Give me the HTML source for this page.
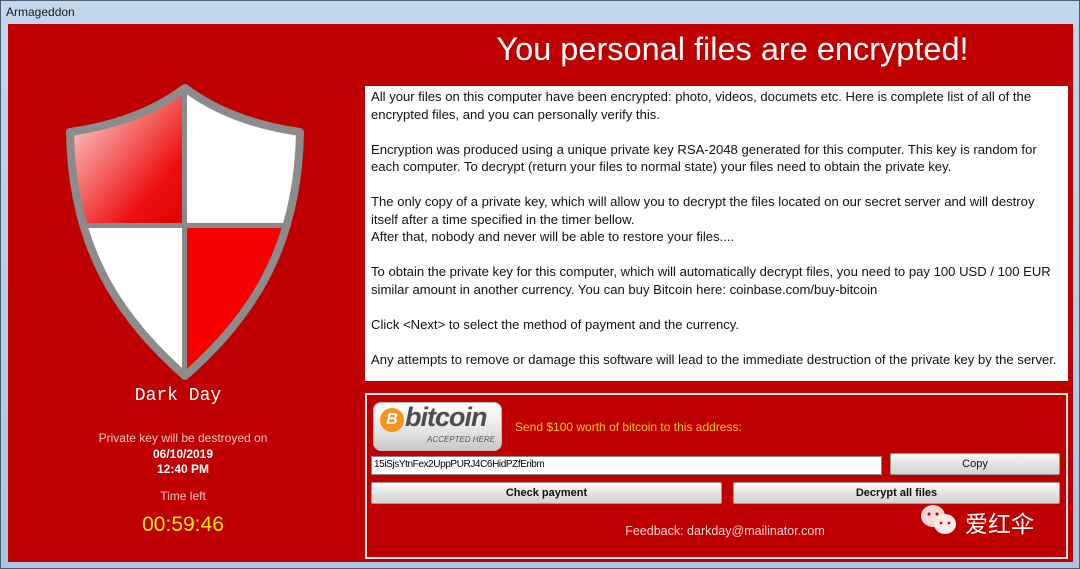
<!DOCTYPE html>
<html><head><meta charset="utf-8"><style>
*{margin:0;padding:0;box-sizing:border-box}
body{width:1080px;height:569px;overflow:hidden;background:#a9c4e0;font-family:"Liberation Sans",sans-serif;position:relative}
.abs{position:absolute}
#frame{left:0;top:0;width:1080px;height:569px;background:linear-gradient(#c2d6ec,#aac6e4);border:1px solid #4a5e72}
#title{left:6px;top:5px;font-size:12px;color:#1a1a1a}
#red{left:8px;top:24px;width:1065px;height:538px;background:#bf0000}
#head{left:365px;top:31px;width:735px;text-align:center;font-size:32.5px;color:#fff}
#txt{left:365px;top:86px;width:703px;height:295px;background:#fff;padding:2px 0 0 6px;font-size:13.1px;line-height:17.5px;color:#111;white-space:nowrap}
#pay{left:365px;top:393px;width:703px;height:166px;border:2px solid #f4e0e0}
.btn{background:linear-gradient(#fafafa,#e2e2e2 55%,#d2d2d2);border:1px solid #9a9a9a;font-size:11px;text-align:center;color:#111;border-radius:2px}
.c{text-align:center;color:#fff}
</style></head><body>
<div id="frame" class="abs"></div>
<div id="title" class="abs">Armageddon</div>
<div id="red" class="abs"></div>
<svg class="abs" style="left:0;top:0" width="360" height="400">
<defs><linearGradient id="g1" x1="0" y1="0" x2="1" y2="1"><stop offset="0" stop-color="#fff"/><stop offset="0.75" stop-color="#ee1010"/><stop offset="1" stop-color="#e00000"/></linearGradient>
<clipPath id="cp"><path d="M185,88 Q140,122 70,132 C72,250 120,318 185,376 C250,318 298,250 300,132 Q230,122 185,88Z"/></clipPath></defs>
<g clip-path="url(#cp)">
<rect x="60" y="80" width="125" height="146" fill="url(#g1)"/>
<rect x="185" y="80" width="125" height="146" fill="#fff"/>
<rect x="60" y="226" width="125" height="160" fill="#fff"/>
<rect x="185" y="226" width="125" height="160" fill="#f80000"/>
<rect x="60" y="223" width="250" height="5" fill="#8a8a8a"/>
<rect x="182" y="80" width="5" height="310" fill="#8a8a8a"/>
</g>
<path d="M185,88 Q140,122 70,132 C72,250 120,318 185,376 C250,318 298,250 300,132 Q230,122 185,88Z" fill="none" stroke="#8c8c8c" stroke-width="8" stroke-linejoin="round"/>
</svg>
<div class="abs c" style="left:78px;top:386px;width:200px;font-family:'Liberation Mono',monospace;font-size:18px;letter-spacing:0px">Dark Day</div>
<div class="abs c" style="left:58px;top:431px;width:250px;font-size:12px;color:#f2c4c4">Private key will be destroyed on</div>
<div class="abs c" style="left:58px;top:447px;width:250px;font-size:12px;font-weight:bold;line-height:15px">06/10/2019<br>12:40 PM</div>
<div class="abs c" style="left:58px;top:489px;width:250px;font-size:12px;color:#f2c4c4">Time left</div>
<div class="abs c" style="left:58px;top:513px;width:250px;font-size:21px;color:#ffea00">00:59:46</div>
<div id="head" class="abs">You personal files are encrypted!</div>
<div id="txt" class="abs">All your files on this computer have been encrypted: photo, videos, documets etc. Here is complete list of all of the<br>encrypted files, and you can personally verify this.<br><br>Encryption was produced using a unique private key RSA-2048 generated for this computer. This key is random for<br>each computer. To decrypt (return your files to normal state) your files need to obtain the private key.<br><br>The only copy of a private key, which will allow you to decrypt the files located on our secret server and will destroy<br>itself after a time specified in the timer bellow.<br>After that, nobody and never will be able to restore your files....<br><br>To obtain the private key for this computer, which will automatically decrypt files, you need to pay 100 USD / 100 EUR<br>similar amount in another currency. You can buy Bitcoin here: coinbase.com/buy-bitcoin<br><br>Click &lt;Next&gt; to select the method of payment and the currency.<br><br>Any attempts to remove or damage this software will lead to the immediate destruction of the private key by the server.</div>
<div id="pay" class="abs"></div>
<div class="abs" style="left:373px;top:402px;width:129px;height:49px;border-radius:8px;background:linear-gradient(#ffffff,#e4e4e4 60%,#c8c8c8);border:1px solid #bbb"></div>
<div class="abs" style="left:380px;top:408px;width:24px;height:24px;border-radius:50%;background:#f7931a;color:#fff;font-weight:bold;font-size:16px;text-align:center;line-height:24px;font-style:italic">B</div>
<div class="abs" style="left:405px;top:402px;font-size:27px;font-weight:bold;font-style:italic;color:#4d4d4d;letter-spacing:-1px">bitcoin</div>
<div class="abs" style="left:427px;top:435px;font-size:8px;font-style:italic;color:#555">ACCEPTED HERE</div>
<div class="abs" style="left:515px;top:420px;font-size:12px;color:#ffc20e">Send $100 worth of bitcoin to this address:</div>
<div class="abs" style="left:371px;top:456px;width:511px;height:19px;background:#fff;border:1px solid #888;font-size:10px;padding:2px 0 0 2px;letter-spacing:-0.4px">15iSjsYtnFex2UppPURJ4C6HidPZfEribm</div>
<div class="abs btn" style="left:890px;top:453px;width:170px;height:22px;line-height:20px">Copy</div>
<div class="abs btn" style="left:371px;top:482px;width:351px;height:22px;line-height:20px;font-weight:bold">Check payment</div>
<div class="abs btn" style="left:733px;top:482px;width:327px;height:22px;line-height:20px;font-weight:bold">Decrypt all files</div>
<div class="abs c" style="left:525px;top:524px;width:400px;font-size:12.5px;color:#f6d0d0">Feedback: darkday@mailinator.com</div>
<svg class="abs" style="left:918px;top:502px" width="44" height="36"><ellipse cx="15" cy="14" rx="12" ry="11" fill="#f4d8d8"/><ellipse cx="27" cy="22" rx="11" ry="10" fill="#fbe8e8"/><circle cx="11" cy="12" r="1.5" fill="#b00"/><circle cx="19" cy="12" r="1.5" fill="#b00"/><circle cx="23" cy="21" r="1.3" fill="#b00"/><circle cx="31" cy="21" r="1.3" fill="#b00"/></svg>
<div class="abs" style="left:965px;top:505px;font-size:23px;color:#fff;font-family:'Liberation Sans','Noto Sans CJK SC',sans-serif">爱红伞</div>
</body></html>
